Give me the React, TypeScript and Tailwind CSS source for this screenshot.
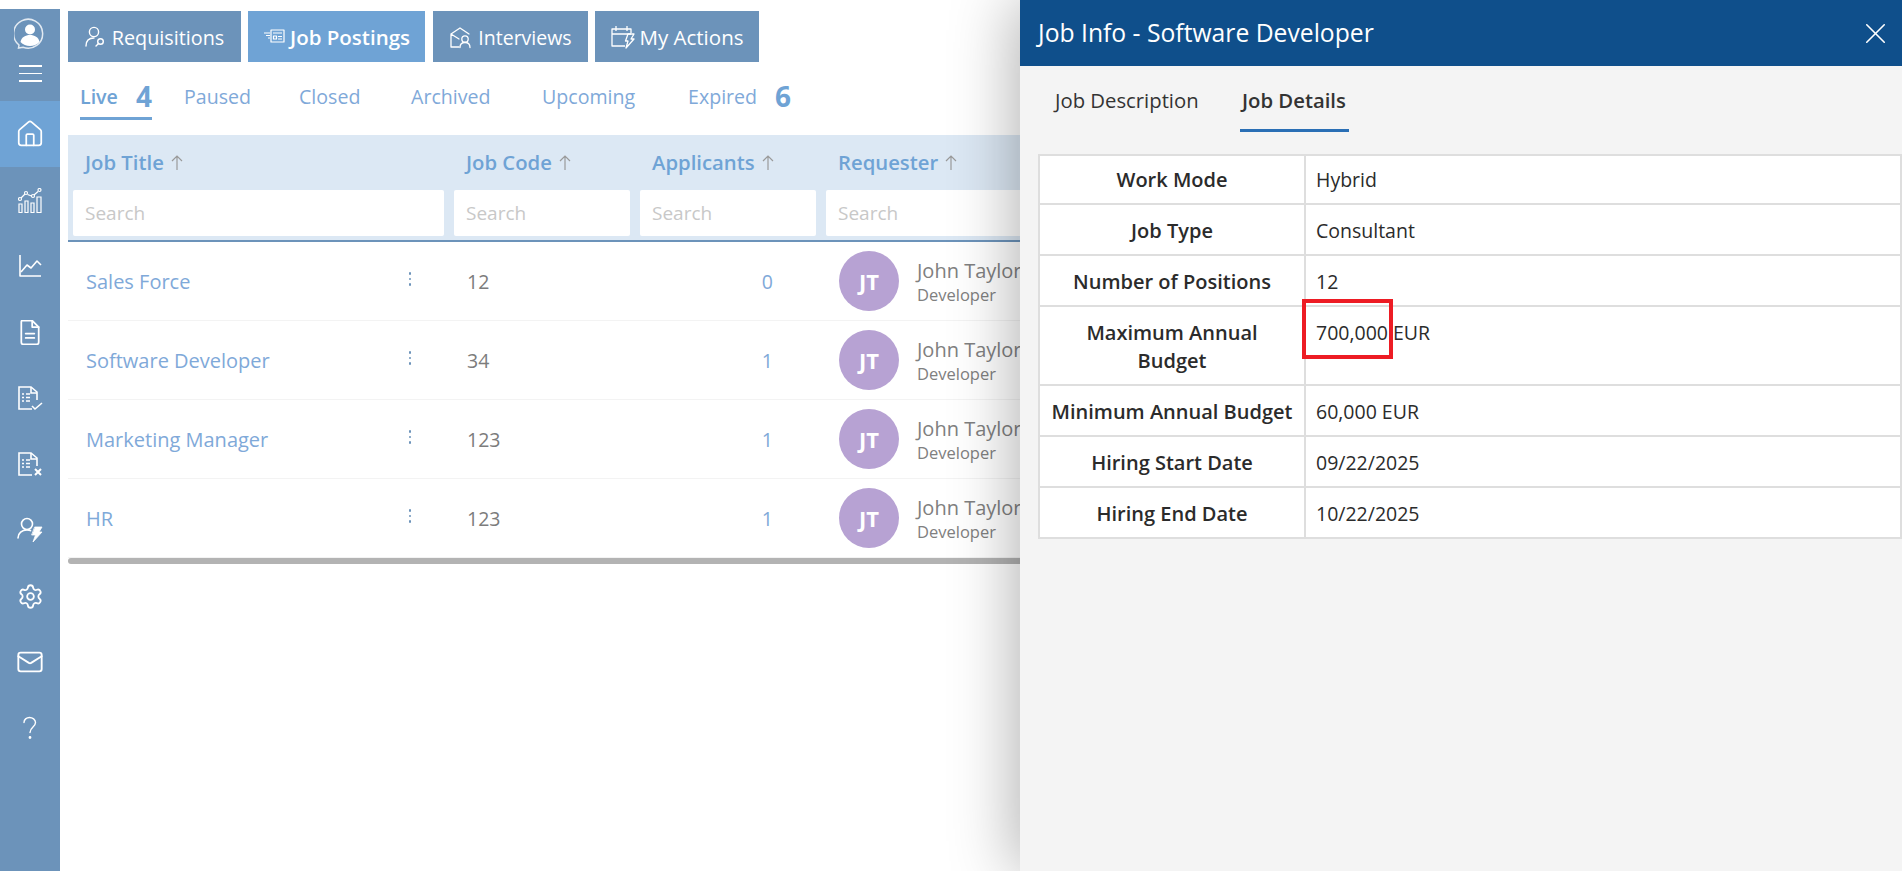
import React from 'react';
import { House, Settings, Mail, X } from 'lucide-react';

const iconProps = { fill: 'none', stroke: 'currentColor', strokeWidth: 1.6, strokeLinecap: 'round' as const, strokeLinejoin: 'round' as const };

const ChartIcon = () => (
  <svg width="24" height="25" viewBox="0 0 24 25" {...iconProps} strokeWidth={1.2} strokeLinecap="butt" strokeLinejoin="miter">
    <path d="M3 10l4-4M9.500 6.500l4 1.500M16 7l4-3.500" />
    <circle cx="2" cy="11" r="1.500" />
    <circle cx="8" cy="5" r="1.500" />
    <circle cx="15" cy="8" r="1.500" />
    <circle cx="21.500" cy="2" r="1.500" />
    <path d="M1 16h3v8.500H1zM7 13h3v11.500H7zM13 15h3v9.500h-3zM19 9h4v15.500h-4z" />
  </svg>
);
const TrendIcon = () => (
  <svg width="24" height="24" viewBox="0 0 24 24" {...iconProps} strokeLinecap="butt">
    <path d="M2 1v21h21" />
    <path d="M3 18l6-7 4 3 6-7 4 4" />
  </svg>
);
const DocIcon = () => (
  <svg width="20" height="25" viewBox="3 1.500 18 23" {...iconProps}>
    <path d="M5 2h9l6 6v14a2 2 0 0 1-2 2H6a2 2 0 0 1-2-2V3a1 1 0 0 1 1-1z" />
    <path d="M14 2v6h6M8 14h8M8 18h8" />
  </svg>
);
const DocMarkIcon = ({ mark }: { mark: 'check' | 'x' }) => (
  <svg width="26" height="26" viewBox="0 0 26 26" {...iconProps} strokeLinecap="butt" strokeLinejoin="miter">
    <path d="M20 15V7l-6-5H2v22h13" />
    <path d="M14 2v6h6" />
    <path d="M5 9h2M9 9h4M5 12.500h2M9 12.500h4M5 16h2M9 16h4" />
    {mark === 'check' ? <path d="M15 21l3 3 7-6" /> : <path d="M18 18l6 6M24 18l-6 6" strokeWidth={2} />}
  </svg>
);
const UserBoltIcon = () => (
  <svg width="26" height="26" viewBox="0 0 26 26" {...iconProps}>
    <circle cx="10" cy="7" r="5.500" />
    <path d="M1 21c0-5 4-8 9-8 1.500 0 2.500.2 3.500.6" />
    <path d="M18 10h7l-3 5h3l-9 10 2.500-7H15z" fill="currentColor" strokeWidth={0.8} />
  </svg>
);
const QuestionIcon = () => (
  <svg width="16" height="24" viewBox="0 0 16 24" {...iconProps} strokeWidth={1.4}>
    <path d="M2 6.500C2 3.500 4.500 1.500 7.500 1.500S13.500 3.500 13.500 6.500c0 4.500-5.500 4.500-5.500 10" />
    <circle cx="8" cy="21.500" r="0.700" />
  </svg>
);
const ProfileIcon = () => (
  <svg width="32" height="32" viewBox="0 0 32 32" className="text-white shrink-0">
    <path d="M5 27A14.500 14.500 0 1 1 9 29.300L4.500 30z" fill="none" stroke="currentColor" strokeWidth="1.500" opacity="0.8" />
    <circle cx="16" cy="11.500" r="5" fill="currentColor" />
    <path d="M6.500 24c1-5 5-7 9.500-7s8.500 2 9.500 7c-2.500 2.800-5.800 4-9.500 4s-7-1.200-9.500-4z" fill="currentColor" />
  </svg>
);
const RequisitionIcon = () => (
  <svg width="22" height="22" viewBox="0 0 22 22" {...iconProps} strokeWidth={1.4}>
    <circle cx="9" cy="6" r="4.600" />
    <path d="M1 20c0-5 3-8 8-8" />
    <circle cx="15.500" cy="15.500" r="2.800" />
    <path d="M13.500 17.500l-2.500 2.500" />
  </svg>
);
const PostingIcon = () => (
  <svg width="22" height="16" viewBox="0 0 22 16" {...iconProps} strokeWidth={1.2} strokeLinecap="butt">
    <path d="M8 1h13v12H8z" />
    <path d="M10 4h9M10.500 7h3v3h-3zM15 7.500h4M15 10h4" />
    <path d="M1 4h6M3 6.500h4M5 9h2" />
  </svg>
);
const InterviewIcon = () => (
  <svg width="24" height="24" viewBox="0 0 24 24" {...iconProps} strokeWidth={1.3}>
    <path d="M2 22V9l9-6 9 6M2 9l8 5M2 22h8" />
    <circle cx="16" cy="14" r="3.200" />
    <path d="M11 22.500c0-3.500 2-5 5-5s5 1.500 5 5" />
  </svg>
);
const ActionsIcon = () => (
  <svg width="24" height="24" viewBox="0 0 24 24" {...iconProps} strokeWidth={1.3} strokeLinecap="butt">
    <path d="M14 21H1V4h19v4M1 9h19M5 1v5M16 1v5" />
    <path d="M17 9h6l-3 5h3l-8 9 2-7h-2.500z" />
  </svg>
);
const SortArrow = () => (
  <svg width="12" height="16" viewBox="0 0 12 16" fill="none" stroke="#9a9a9a" strokeWidth="1.200">
    <path d="M6 15V1M1 6l5-5 5 5" />
  </svg>
);

const navItems: { icon: React.ReactNode; active?: boolean }[] = [
  { icon: <House size={30} strokeWidth={1.4} />, active: true },
  { icon: <ChartIcon /> },
  { icon: <TrendIcon /> },
  { icon: <DocIcon /> },
  { icon: <DocMarkIcon mark="check" /> },
  { icon: <DocMarkIcon mark="x" /> },
  { icon: <UserBoltIcon /> },
  { icon: <Settings size={27} strokeWidth={1.6} /> },
  { icon: <Mail size={28} strokeWidth={1.6} /> },
  { icon: <QuestionIcon /> },
];

const topTabs = [
  { label: 'Requisitions', icon: <RequisitionIcon />, cls: 'w-[173px] mr-[7px] bg-[#6c93ba] font-normal text-[19.800px]' },
  { label: 'Job Postings', icon: <PostingIcon />, cls: 'w-[177px] mr-[8px] bg-[#6fa3d5] font-semibold text-[20.500px]' },
  { label: 'Interviews', icon: <InterviewIcon />, cls: 'w-[155px] mr-[7px] bg-[#6c93ba] font-normal text-[19.500px]' },
  { label: 'My Actions', icon: <ActionsIcon />, cls: 'w-[164px] bg-[#6c93ba] font-normal text-[20.500px]' },
];

const rows = [
  { title: 'Sales Force', code: '12', applicants: '0' },
  { title: 'Software Developer', code: '34', applicants: '1' },
  { title: 'Marketing Manager', code: '123', applicants: '1' },
  { title: 'HR', code: '123', applicants: '1' },
];

const details = [
  { label: ['Work Mode'], value: 'Hybrid' },
  { label: ['Job Type'], value: 'Consultant' },
  { label: ['Number of Positions'], value: '12' },
  { label: ['Maximum Annual', 'Budget'], value: '700,000 EUR' },
  { label: ['Minimum Annual Budget'], value: '60,000 EUR' },
  { label: ['Hiring Start Date'], value: '09/22/2025' },
  { label: ['Hiring End Date'], value: '10/22/2025' },
];

const gridCols = 'grid grid-cols-[381px_186px_186px_400px]';

const HeaderCell = ({ label }: { label: string }) => (
  <div className="flex flex-col px-[5px]">
    <div className="h-[55px] pl-[12px] flex items-center gap-[7px] text-[#6fa3d5] text-[20.300px] font-semibold">
      {label}
      <SortArrow />
    </div>
    <div className="h-[46px] bg-white rounded-[2px] pl-[12px] flex items-center text-[19px] text-[#c8c8c8]">Search</div>
  </div>
);

export default function App() {
  return (
    <div className="relative h-[871px] w-[1902px] overflow-hidden bg-white flex font-['Open_Sans',sans-serif]">
      <aside className="w-[60px] shrink-0 mt-[9px] bg-[#6c93ba] text-white">
        <div className="h-[92px] flex flex-col items-center pt-[9px] gap-[15px]">
          <ProfileIcon />
          <div className="w-[23px] flex flex-col gap-[6px]">
            <div className="h-[1.500px] bg-white" />
            <div className="h-[1.500px] bg-white" />
            <div className="h-[1.500px] bg-white" />
          </div>
        </div>
        {navItems.map((item, i) => (
          <div key={i} className={`h-[66px] flex items-center justify-center ${item.active ? 'bg-[#6fa3d5]' : ''}`}>
            {item.icon}
          </div>
        ))}
      </aside>

      <main className="flex-1 pl-[8px] pt-[11px] min-w-0">
        <div className="flex h-[51px]">
          {topTabs.map(tab => (
            <div key={tab.label} className={`flex items-center justify-center gap-[5px] text-white ${tab.cls}`}>
              {tab.icon}
              <span className="pt-[2px]">{tab.label}</span>
            </div>
          ))}
        </div>

        <div className="h-[73px] pl-[12px] relative flex items-start pt-[20px] text-[19.600px] text-[#7fa9d9]">
          <div className="w-[104px] h-[38px] flex">
            <div className="w-[72px] h-[38px] border-b-[3px] border-[#6fa3d5] flex justify-between">
              <span className="font-semibold text-[#6fa3d5]">Live</span>
              <span className="font-bold text-[28px] leading-[28px] text-[#6fa3d5]">4</span>
            </div>
          </div>
          <span className="w-[115px]">Paused</span>
          <span className="w-[112px]">Closed</span>
          <span className="w-[131px]">Archived</span>
          <span className="w-[146px]">Upcoming</span>
          <span className="w-[87px]">Expired</span>
          <span className="font-bold text-[28px] leading-[28px] text-[#6fa3d5]">6</span>
        </div>

        <div className="w-[1400px] h-[107px] bg-[#dce8f4] border-b-2 border-[#6c93ba] pb-[5px]">
          <div className={gridCols}>
            <HeaderCell label="Job Title" />
            <HeaderCell label="Job Code" />
            <HeaderCell label="Applicants" />
            <HeaderCell label="Requester" />
          </div>
        </div>

        {rows.map(row => (
          <div key={row.title} className={`${gridCols} w-[1400px] h-[79px] items-center border-b border-[#f3f3f3] last:border-b-0`}>
            <div className="pl-[18px] pr-[38px] flex items-center justify-between">
              <span className="pt-[2px] text-[20px] text-[#7fa9d9]">{row.title}</span>
              <div className="flex flex-col gap-[3px] mb-[4px]">
                <div className="w-[2.500px] h-[2.500px] rounded-full bg-[#6c93ba]" />
                <div className="w-[2.500px] h-[2.500px] rounded-full bg-[#6c93ba]" />
                <div className="w-[2.500px] h-[2.500px] rounded-full bg-[#6c93ba]" />
              </div>
            </div>
            <div className="pl-[18px] pt-[2px] text-[19.500px] text-[#7c7c7c]">{row.code}</div>
            <div className="pr-[48px] pt-[2px] text-right text-[19.500px] text-[#7fa9d9]">{row.applicants}</div>
            <div className="pl-[18px] flex items-center gap-[18px]">
              <div className="w-[60px] h-[60px] rounded-full bg-[#b7a2d3] text-white font-bold text-[22px] flex items-center justify-center">JT</div>
              <div className="flex flex-col pt-[2px]">
                <span className="text-[20px] leading-[26px] text-[#808080] whitespace-nowrap">John Taylor</span>
                <span className="text-[16.500px] leading-[22px] text-[#808080]">Developer</span>
              </div>
            </div>
          </div>
        ))}
        <div className="w-[1400px] h-[6px] rounded-full bg-[#b3b3b3]" />
      </main>

      <section className="absolute right-0 top-0 h-full w-[882px] bg-[#f4f4f4] shadow-[-6px_0_60px_rgba(0,0,0,0.3)]">
        <header className="h-[66px] bg-[#0f4f8b] flex items-center justify-between pl-[18px] pr-[9px] text-white">
          <h1 className="text-[24.700px] font-normal">Job Info - Software Developer</h1>
          <X size={35} strokeWidth={1.1} />
        </header>
        <div className="h-[66px] pl-[20px] flex text-[20.300px] text-[#333333]">
          <div className="w-[200px] pl-[15px] pt-[19px]">Job Description</div>
          <div className="w-[109px] h-[66px] pl-[2px] pt-[19px] font-semibold border-b-[3px] border-[#2a6fb5] whitespace-nowrap">Job Details</div>
        </div>
        <div className="mt-[22px] ml-[18px] w-[864px] relative">
          <table className="w-full table-fixed border-collapse bg-white text-[#2b2b2b]">
            <tbody>
              {details.map((d, i) => (
                <tr key={d.value}>
                  <th className={`w-[266px] border-2 border-[#dedede] ${i === 0 ? 'pt-[10px]' : 'pt-[12px]'} pb-[9px] px-2 font-semibold text-center align-top leading-[28px] text-[20px]`}>
                    {d.label.map(line => <div key={line}>{line}</div>)}
                  </th>
                  <td className={`border-2 border-[#dedede] ${i === 0 ? 'pt-[10px]' : 'pt-[12px]'} pb-[9px] pl-[10px] align-top leading-[28px] text-[19.500px]`}>{d.value}</td>
                </tr>
              ))}
            </tbody>
          </table>
          <div className="absolute left-[264px] top-[145px] w-[91px] h-[60px] border-[4px] border-[#ed1c24]" />
        </div>
      </section>
    </div>
  );
}
